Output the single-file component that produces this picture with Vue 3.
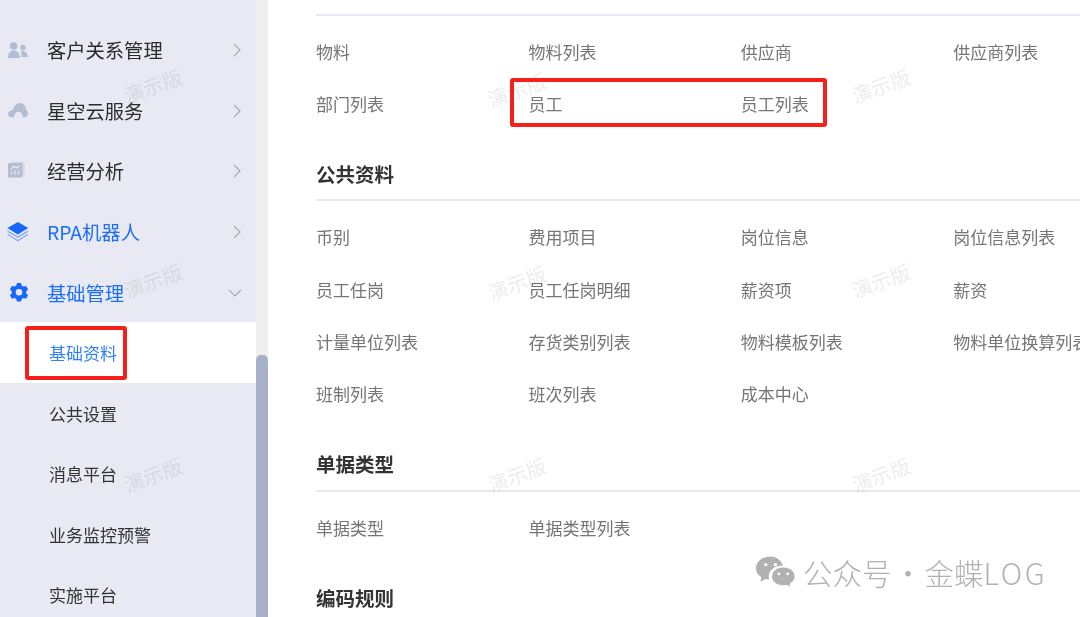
<template>
  <div class="page">
    <!-- Sidebar -->
    <aside class="side">
      <div
        v-for="m in menus"
        :key="m.label"
        class="menu-row"
        :class="{ 'menu-row--active': m.active }"
      >
        <svg class="menu-icon" viewBox="0 0 20 20" :style="{ color: m.active ? '#1568fb' : '#b4bed2' }">
          <template v-if="m.icon === 'users'">
            <circle cx="5.600" cy="6" r="3.800" fill="currentColor" />
            <path d="M0 18c0-5 1.800-7.500 5.600-7.500s6 2.500 6.400 7.500z" fill="currentColor" />
            <circle cx="15" cy="7.500" r="2.700" fill="currentColor" />
            <path d="M13 11.200c3.600-1.200 6.400 1.400 7 5.800h-6.500c0-2.200-.1-4.200-.5-5.800z" fill="currentColor" />
          </template>
          <template v-else-if="m.icon === 'cloud'">
            <path d="M3.400 16.200C1.400 16.200 0 14.800 0 13c0-1.600 1-2.900 2.600-3.300.7-.4 1.400-.8 2.400-.9C6 5 8.300 2 11.600 2c3.600 0 6.200 2.800 6.400 6.700 1.300.8 2 2.200 2 3.700 0 2.200-1.600 3.800-3.900 3.800h-1.500c.3-2.800-1.600-5.500-4.300-5.500-2.500 0-4.300 2.700-4 5.500z" fill="currentColor" />
          </template>
          <template v-else-if="m.icon === 'chart'">
            <rect x="3" y="0.500" width="14" height="14" rx="1" fill="#d9ddeb" />
            <rect x="0" y="2" width="14.500" height="14.500" rx="1" fill="currentColor" />
            <path d="M3.500 13.500v-3M7 13.500V9.500M10.500 13.500v-4M2.800 8l3.400-2.600 2.600 1.600 2.800-2.400" fill="none" stroke="#e8e9f3" stroke-width="1.300" />
          </template>
          <template v-else-if="m.icon === 'layers'">
            <path d="M9.800 0 20.200 6 9.800 12.400-.6 6z" fill="currentColor" />
            <path d="M-.4 9.200 9.800 15.200 20 9.200M-.4 12.400 9.800 18.600 20 12.400" fill="none" stroke="currentColor" stroke-width="1.100" opacity=".6" />
          </template>
          <template v-else>
            <path fill-rule="evenodd" d="M9 0h4l.8 2.700 1.500.9 2.800-.7 2 3.500-2 2v1.800l2 2-2 3.500-2.800-.7-1.500.9L13 18.600H9l-.8-2.700-1.500-.9-2.800.7-2-3.500 2-2V8.400l-2-2 2-3.500 2.800.7 1.500-.9zM11 6a3.300 3.300 0 1 0 0 6.600A3.300 3.300 0 0 0 11 6z" fill="currentColor" />
          </template>
        </svg>
        <span class="menu-label">{{ m.label }}</span>
        <svg v-if="m.open" class="chev chev--down" viewBox="0 0 14 8">
          <path d="M1 1l6 6 6-6" />
        </svg>
        <svg v-else class="chev" viewBox="0 0 8 14">
          <path d="M1 1l6 6-6 6" />
        </svg>
      </div>

      <div class="sub-list">
        <div
          v-for="s in subMenus"
          :key="s"
          class="sub-row"
          :class="{ 'sub-row--current': s === '基础资料' }"
        >
          {{ s }}
        </div>
      </div>
    </aside>

    <!-- Scrollbar -->
    <div class="track"><div class="thumb"></div></div>

    <!-- Content -->
    <main class="content">
      <section v-for="sec in sections" :key="sec.key" class="sec">
        <header class="sec-head" :class="{ 'sec-head--bare': !sec.title }">
          <h3 v-if="sec.title" class="sec-title">{{ sec.title }}</h3>
        </header>
        <div class="grid" :class="{ 'grid--first': !sec.title }">
          <span v-for="item in sec.items" :key="item" class="cell">{{ item }}</span>
        </div>
      </section>
    </main>

    <!-- Overlays -->
    <span
      v-for="(w, i) in watermarks"
      :key="i"
      class="mark"
      :style="{ left: w[0] + 'px', top: w[1] + 'px' }"
    >演示版</span>

    <div class="red red--nav"></div>
    <div class="red red--emp"></div>

    <div class="brand">
      <svg class="brand-icon" viewBox="0 0 42 34">
        <path d="M16 1C7.700 1 1 6.400 1 13.100c0 3.800 2.100 7.100 5.500 9.300L5.600 27l5-2.800c1.300.3 2.600.5 4 .5-.3-1-.5-2-.5-3.100 0-6.200 5.800-11.100 13-11.100.6 0 1 0 1.500.1C27 5 22 1 16 1z" fill="#b1b1b1" />
        <path d="M41 21.500c0-5.300-5.300-9.600-12-9.600s-12 4.300-12 9.600 5.300 9.600 12 9.600c1.200 0 2.300-.1 3.400-.4l4.300 2.300-.8-3.700c3-1.800 5.100-4.600 5.100-7.800z" fill="#b1b1b1" stroke="#fff" stroke-width="1" />
        <circle cx="11" cy="9.500" r="1.700" fill="#fff" />
        <circle cx="21" cy="9.500" r="1.700" fill="#fff" />
        <circle cx="24.500" cy="19" r="1.400" fill="#fff" />
        <circle cx="33.500" cy="19" r="1.400" fill="#fff" />
      </svg>
      <span class="brand-text">公众号<span class="brand-dot">·</span>金蝶<span class="brand-log">LOG</span></span>
    </div>
  </div>
</template>

<script setup>
const menus = [
  { label: "客户关系管理", icon: "users" },
  { label: "星空云服务", icon: "cloud" },
  { label: "经营分析", icon: "chart" },
  { label: "RPA机器人", icon: "layers", active: true },
  { label: "基础管理", icon: "gear", active: true, open: true },
];

const subMenus = ["基础资料", "公共设置", "消息平台", "业务监控预警", "实施平台"];

const sections = [
  {
    key: "top",
    title: "",
    items: ["物料", "物料列表", "供应商", "供应商列表", "部门列表", "员工", "员工列表"],
  },
  {
    key: "public",
    title: "公共资料",
    items: [
      "币别", "费用项目", "岗位信息", "岗位信息列表",
      "员工任岗", "员工任岗明细", "薪资项", "薪资",
      "计量单位列表", "存货类别列表", "物料模板列表", "物料单位换算列表",
      "班制列表", "班次列表", "成本中心",
    ],
  },
  { key: "bill", title: "单据类型", items: ["单据类型", "单据类型列表"] },
  { key: "code", title: "编码规则", items: [] },
];

const watermarks = [
  [123, 74], [123, 269], [123, 463],
  [487, 78], [487, 271], [487, 463],
  [851, 74], [851, 269], [851, 463],
];
</script>

<style scoped>
.page {
  position: relative;
  display: flex;
  width: 1080px;
  height: 617px;
  overflow: hidden;
  background: #fff;
  font-family: "Noto Sans CJK SC", "Noto Sans", sans-serif;
  filter: blur(0.3px);
}

/* Sidebar */
.side {
  width: 256px;
  flex-shrink: 0;
  padding-top: 20px;
  background: #e8e9f3;
}
.menu-row {
  display: flex;
  align-items: center;
  height: 60.600px;
  padding-left: 8px;
  color: #2b2b2b;
  font-size: 19.300px;
}
.menu-row--active {
  color: #1a6ffb;
}
.menu-icon {
  width: 20px;
  height: 20px;
  flex-shrink: 0;
  overflow: visible;
}
.menu-label {
  margin-left: 19px;
  flex: 1;
}
.chev {
  width: 8px;
  height: 14px;
  margin-right: 15px;
  fill: none;
  stroke: #a6a9b3;
  stroke-width: 1.200;
}
.chev--down {
  width: 14px;
  height: 8px;
  margin-right: 14px;
}
.sub-list {
  margin-top: -0.700px;
}
.sub-row {
  display: flex;
  align-items: center;
  height: 60.600px;
  padding-left: 49px;
  color: #333;
  font-size: 17px;
}
.sub-row--current {
  background: #fff;
  color: #2f80fa;
}

/* Scrollbar */
.track {
  width: 12px;
  flex-shrink: 0;
  padding-top: 355px;
  background: #eeeeee;
}
.thumb {
  height: 262px;
  border-radius: 5px 5px 0 0;
  background: #a6b1c8;
}

/* Content */
.content {
  flex: 1;
  min-width: 0;
  padding-left: 48px;
}
.sec-head {
  display: flex;
  align-items: flex-end;
  height: 69.600px;
  border-bottom: 2px solid #e8e9f0;
}
.sec-head--bare {
  height: 14px;
}
.sec-title {
  margin: 0 0 12.500px;
  color: #333;
  font-size: 19.500px;
  font-weight: 700;
  line-height: 26px;
}
.grid {
  display: grid;
  grid-template-columns: repeat(4, 212.400px);
  grid-auto-rows: 52.200px;
  padding: 9.500px 0 0.300px;
}
.grid--first {
  padding-top: 9.100px;
}
.cell {
  display: flex;
  align-items: center;
  color: #757575;
  font-size: 17px;
  white-space: nowrap;
}

/* Overlays */
.mark {
  position: absolute;
  color: rgba(40, 40, 60, 0.085);
  font-size: 20px;
  line-height: 24px;
  transform: rotate(-20deg);
  pointer-events: none;
}
.red {
  position: absolute;
  box-sizing: border-box;
  border: 4px solid #f5201a;
  border-radius: 3px;
}
.red--nav {
  left: 25px;
  top: 326px;
  width: 102px;
  height: 54px;
}
.red--emp {
  left: 510px;
  top: 78px;
  width: 317px;
  height: 49px;
}
.brand {
  position: absolute;
  left: 755px;
  top: 551px;
  display: flex;
  align-items: center;
  gap: 9px;
}
.brand-icon {
  width: 41px;
  height: 34px;
}
.brand-text {
  margin-left: -2px;
  color: #b1b1b1;
  font-size: 29.500px;
  font-weight: 300;
  line-height: 42px;
  white-space: nowrap;
}
.brand-dot {
  display: inline-block;
  width: 33px;
  text-align: center;
}
.brand-log {
  letter-spacing: 2.500px;
}
</style>
